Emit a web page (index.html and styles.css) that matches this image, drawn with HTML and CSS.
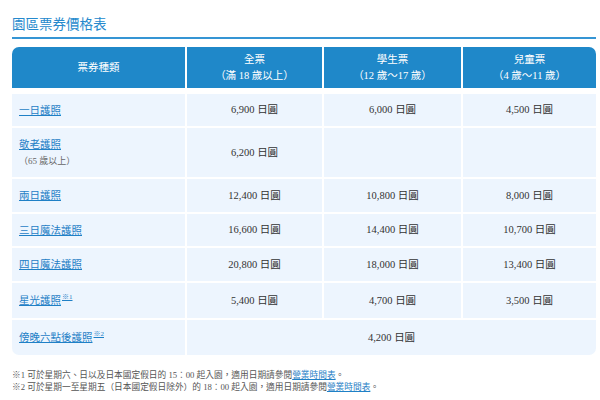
FILE: index.html
```html
<!DOCTYPE html>
<html lang="zh-Hant">
<head>
<meta charset="utf-8">
<title>園區票券價格表</title>
<link rel="stylesheet" href="styles.css">
</head>
<body>
<div class="page">
  <h1 class="title">園區票券價格表</h1>
  <div class="price-table">
    <div class="th th-first">票券種類</div>
    <div class="th">全票<br>（滿 18 歲以上）</div>
    <div class="th">學生票<br>（12 歲～17 歲）</div>
    <div class="th th-last">兒童票<br>（4 歲～11 歲）</div>

    <div class="td name"><span><a href="#">一日護照</a></span></div>
    <div class="td">6,900 日圓</div>
    <div class="td">6,000 日圓</div>
    <div class="td">4,500 日圓</div>

    <div class="td name"><span><a href="#">敬老護照</a></span><span class="note">（65 歲以上）</span></div>
    <div class="td">6,200 日圓</div>
    <div class="td"></div>
    <div class="td"></div>

    <div class="td name"><span><a href="#">兩日護照</a></span></div>
    <div class="td">12,400 日圓</div>
    <div class="td">10,800 日圓</div>
    <div class="td">8,000 日圓</div>

    <div class="td name"><span><a href="#">三日魔法護照</a></span></div>
    <div class="td">16,600 日圓</div>
    <div class="td">14,400 日圓</div>
    <div class="td">10,700 日圓</div>

    <div class="td name"><span><a href="#">四日魔法護照</a></span></div>
    <div class="td">20,800 日圓</div>
    <div class="td">18,000 日圓</div>
    <div class="td">13,400 日圓</div>

    <div class="td name"><span><a href="#">星光護照</a><a class="sup" href="#">※1</a></span></div>
    <div class="td">5,400 日圓</div>
    <div class="td">4,700 日圓</div>
    <div class="td">3,500 日圓</div>

    <div class="td name bl"><span><a href="#">傍晚六點後護照</a><a class="sup" href="#">※2</a></span></div>
    <div class="td span3 br">4,200 日圓</div>
  </div>
  <div class="footnotes">
    <p>※1 可於星期六、日以及日本國定假日的 15：00 起入園，適用日期請參閱<a href="#">營業時間表</a>。</p>
    <p>※2 可於星期一至星期五（日本國定假日除外）的 18：00 起入園，適用日期請參閱<a href="#">營業時間表</a>。</p>
  </div>
</div>
</body>
</html>
```

FILE: styles.css
```css
html, body {
  margin: 0;
  padding: 0;
  background: #ffffff;
}
body {
  font-family: "Liberation Serif", "Noto Sans CJK TC", serif;
  color: #333333;
}
.page {
  padding: 15px 4px 0 12px;
}
.title {
  margin: 0;
  font-size: 13.5px;
  line-height: 20px;
  font-weight: normal;
  color: #2589cd;
  padding-bottom: 2px;
  border-bottom: 2px solid #3595d4;
}
.price-table {
  margin-top: 8px;
  display: grid;
  grid-template-columns: 173px 135px 137px 133px;
  grid-template-rows: 45px 32px 49px 33px 32px 33px 35px 35px;
  gap: 2px;
  font-size: 10.5px;
}
.th {
  height: 41px;
  align-self: start;
  background: #1f88c9;
  color: #ffffff;
  display: flex;
  align-items: center;
  justify-content: center;
  text-align: center;
  line-height: 16px;
}
.th-first { border-top-left-radius: 7px; }
.th-last { border-top-right-radius: 7px; }
.td {
  background: #edf5fe;
  display: flex;
  align-items: center;
  justify-content: center;
  line-height: 16px;
  color: #333333;
}
.td.name {
  flex-direction: column;
  justify-content: center;
  align-items: flex-start;
  padding-left: 7px;
  line-height: 17px;
}
.td.name .note {
  font-size: 9px;
  color: #666666;
  line-height: 17px;
}
a {
  color: #1f80c6;
  text-decoration: underline;
}
.sup {
  font-size: 7px;
  vertical-align: 5px;
  line-height: 7px;
  margin-left: 1px;
}
.span3 { grid-column: span 3; }
.bl { border-bottom-left-radius: 7px; }
.br { border-bottom-right-radius: 7px; }
.footnotes {
  margin-top: 14px;
  font-size: 8.7px;
  line-height: 12px;
  color: #555555;
}
.footnotes p {
  margin: 0;
}
```
